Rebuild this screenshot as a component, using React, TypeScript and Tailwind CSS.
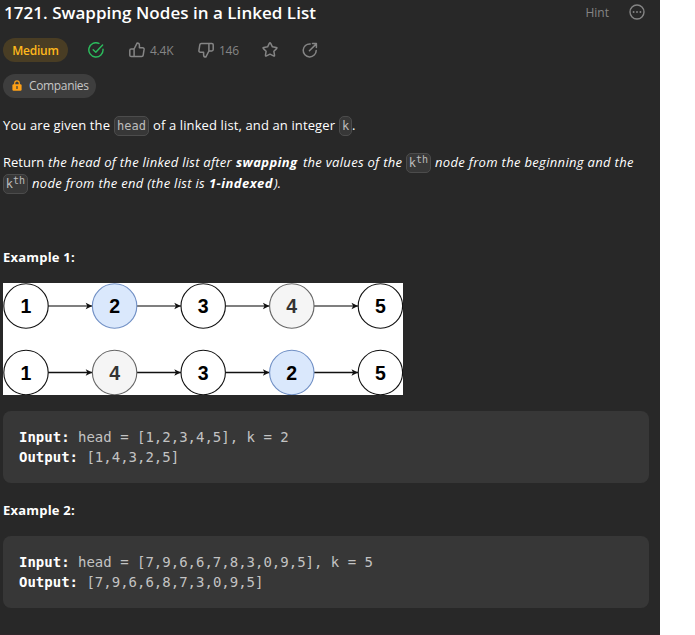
import React from 'react';

const sans = "font-['Open_Sans','Noto_Sans',sans-serif]";
const mono = "font-['DejaVu_Sans_Mono',monospace]";

function Code({ children, className }: { children: React.ReactNode; className: string }) {
  return (
    <code className={`flex h-5 shrink-0 items-center justify-center rounded-[5px] border border-[#4c4c4c] bg-[#373737] text-[12px] leading-none not-italic text-[#bcbcbc] ${mono} ${className}`}>
      {children}
    </code>
  );
}

function Kth() {
  return (
    <Code className="w-[25px]">
      <span>k</span>
      <span className="relative -top-[3px] text-[10px]">th</span>
    </Code>
  );
}

function Companies() {
  return (
    <div className="mt-3 flex h-6 w-[93px] items-center rounded-full bg-[#3e3e3e] pl-[9px] text-[12px] text-[#c6c6c6]">
      <svg className="mr-[7px] h-3 w-[10px]" viewBox="0 0 10 12" fill="none">
        <path d="M2.7 5V3.2a2.3 2.3 0 0 1 4.6 0V5" stroke="#ffa116" strokeWidth="1.2" />
        <rect x="0.4" y="4.2" width="9.2" height="6.6" rx="1.2" fill="#ffa116" />
        <path d="M5 6.6v1.8" stroke="#3e3e3e" strokeWidth="1.3" strokeLinecap="round" />
      </svg>
      <span className="tracking-[-0.35px]">Companies</span>
    </div>
  );
}

function CheckIcon() {
  return (
    <svg className="h-4 w-4" viewBox="0 0 16 16" fill="none" stroke="#2cbb5d" strokeWidth="1.45" strokeLinecap="round" strokeLinejoin="round">
      <path d="M10.9 1.4A7.1 7.1 0 1 0 15 7.3" />
      <path d="m5.2 7.8 2.6 2.5L14.6 3" />
    </svg>
  );
}

function ThumbIcon({ down = false }: { down?: boolean }) {
  return (
    <svg className={down ? 'h-4 w-4 rotate-180' : 'h-4 w-4'} viewBox="0 0 16 16" fill="none" stroke="#858585" strokeWidth="1.5" strokeLinejoin="round">
      <path d="M5.1 7 8.2.9c1.6 0 2.2 1 2.2 2.2v2.6h3.2c1 0 1.6.8 1.5 1.7l-.9 5.8c-.1.9-.8 1.4-1.6 1.4H5.1z" />
      <path d="M5.1 7H2.2C1.2 7 .8 7.5.8 8.4v4.8c0 .9.5 1.4 1.4 1.4h2.9" />
    </svg>
  );
}

function StarIcon() {
  return (
    <svg className="h-4 w-4" viewBox="0 0 16 16" fill="none" stroke="#858585" strokeWidth="1.5" strokeLinejoin="round">
      <path d="M7.3 1.4q.7-1.2 1.4 0l1.7 3.4 3.8.6q1.3.2.4 1.2l-2.7 2.7.6 3.9q.1 1.3-1 .7L8 12.2l-3.5 1.7q-1.1.6-1-.7l.6-3.9-2.7-2.7q-.9-1 .4-1.2l3.8-.6z" />
    </svg>
  );
}

function ShareIcon() {
  return (
    <svg className="h-4 w-4" viewBox="0 0 16 16" fill="none" stroke="#858585" strokeWidth="1.5" strokeLinecap="round" strokeLinejoin="round">
      <path d="M8.2 1.9A6.5 6.5 0 1 0 14.2 8.4" />
      <path d="m7.4 8.8 6.7-6.7M10.5 1.6h3.9v3.9" />
    </svg>
  );
}

function MoreIcon() {
  return (
    <svg className="h-4 w-4" viewBox="0 0 16 16" fill="none">
      <circle cx="8" cy="8" r="7" stroke="#858585" strokeWidth="1.4" />
      <g fill="#858585">
        <circle cx="4.6" cy="8" r="0.95" />
        <circle cx="8" cy="8" r="0.95" />
        <circle cx="11.4" cy="8" r="0.95" />
      </g>
    </svg>
  );
}

const styles: Record<string, { fill: string; stroke: string; text: string }> = {
  '2': { fill: '#dae8fc', stroke: '#7190c5', text: '#000' },
  '4': { fill: '#f5f5f5', stroke: '#666', text: '#333' },
};
const plain = { fill: '#fff', stroke: '#111', text: '#000' };

function ListRow({ values, y, line }: { values: string[]; y: number; line: string }) {
  return (
    <g>
      {values.map((v, i) => {
        const s = styles[v] ?? plain;
        const x = 23 + i * 88.6;
        return (
          <g key={i}>
            {i < 4 && <path d={`M${x + 22} ${y}h61`} stroke={line} strokeWidth="1.3" />}
            {i < 4 && <path d={`M${x + 66.2} ${y}l-6.5 -3.3 1.6 3.3-1.6 3.3z`} fill="#111" />}
            <circle cx={x} cy={y} r="22.2" fill={s.fill} stroke={s.stroke} strokeWidth="1.1" />
            <text x={x} y={y + 7} textAnchor="middle" fontSize="19.5" fontWeight="700" fill={s.text} className="font-['Liberation_Sans',sans-serif]">
              {v}
            </text>
          </g>
        );
      })}
    </g>
  );
}

function Example({ input, output }: { input: string; output: string }) {
  return (
    <pre className={`h-[72px] rounded-lg bg-[#373737] px-4 pt-4 text-[14px] leading-5 text-[#c3c3c3] ${mono}`}>
      <b className="text-white">Input:</b>{` ${input}\n`}
      <b className="text-white">Output:</b>{` ${output}`}
    </pre>
  );
}

export default function App() {
  return (
    <div className="h-[635px] w-[695px] overflow-hidden bg-white">
      <main className={`flex h-full w-[660px] flex-col border-b border-[#30262a] bg-[#282828] pl-[3px] pr-[11px] text-[13px] text-white ${sans}`}>
        <header className="flex h-[25px] items-center">
          <h1 className="pl-px text-[17px] font-semibold tracking-[0.03px] whitespace-nowrap">1721. Swapping Nodes in a Linked List</h1>
          <span className="ml-auto text-[12px] text-[#858585]">Hint</span>
          <span className="mr-1 mb-px ml-5"><MoreIcon /></span>
        </header>
        <div className="mt-[13px] flex h-6 items-center text-[12px] text-[#858585]">
          <span className="flex h-6 w-[65px] items-center justify-center rounded-full bg-[#493d24] pt-px font-semibold tracking-[-0.25px] text-[#ffb81c]">Medium</span>
          <span className="ml-5"><CheckIcon /></span>
          <span className="ml-[25px]"><ThumbIcon /></span>
          <span className="ml-[5px] w-[24px] pt-px tracking-[-0.25px]">4.4K</span>
          <span className="ml-6"><ThumbIcon down /></span>
          <span className="ml-[5px] w-[19px] pt-px tracking-[-0.25px]">146</span>
          <span className="ml-6"><StarIcon /></span>
          <span className="ml-6"><ShareIcon /></span>
        </div>
        <Companies />
        <p className="mt-[18px] flex h-5 items-center whitespace-nowrap">
          <span className="w-[111px] tracking-[0.12px]">You are given the</span>
          <Code className="w-[35px]">head</Code>
          <span className="ml-1 w-[186px] tracking-[0.12px]">of a linked list, and an integer</span>
          <Code className="w-[13px]">k</Code>
          <span>.</span>
        </p>
        <div className="mt-4">
          <p className="flex h-[21px] items-center whitespace-nowrap italic">
            <span className="w-[45px] not-italic">Return</span>
            <span className="w-[188px] tracking-[0.27px]">the head of the linked list after</span>
            <b className="w-[67px] tracking-[0.38px]">swapping</b>
            <span className="w-[103px] tracking-[0.3px]">the values of the</span>
            <Kth />
            <span className="ml-1 tracking-[0.32px]">node from the beginning and the</span>
          </p>
          <p className="flex h-[21px] items-center whitespace-nowrap italic">
            <Kth />
            <span className="ml-1 w-[177px] tracking-[0.3px]">node from the end (the list is</span>
            <b className="w-[65px] tracking-[0.45px]">1-indexed</b>
            <span>).</span>
          </p>
        </div>
        <h2 className="mt-[53px] h-[21px] leading-[21px] font-bold tracking-[0.2px]">Example 1:</h2>
        <svg className="mt-[15px] h-[112px] w-[400px] shrink-0 bg-white" viewBox="0 0 400 112">
          <ListRow values={['1', '2', '3', '4', '5']} y={23} line="#555" />
          <ListRow values={['1', '4', '3', '2', '5']} y={89.5} line="#111" />
        </svg>
        <div className="mt-4">
          <Example input="head = [1,2,3,4,5], k = 2" output="[1,4,3,2,5]" />
        </div>
        <h2 className="mt-[17px] h-[21px] leading-[21px] font-bold tracking-[0.2px]">Example 2:</h2>
        <div className="mt-[15px]">
          <Example input="head = [7,9,6,6,7,8,3,0,9,5], k = 5" output="[7,9,6,6,8,7,3,0,9,5]" />
        </div>
      </main>
    </div>
  );
}
